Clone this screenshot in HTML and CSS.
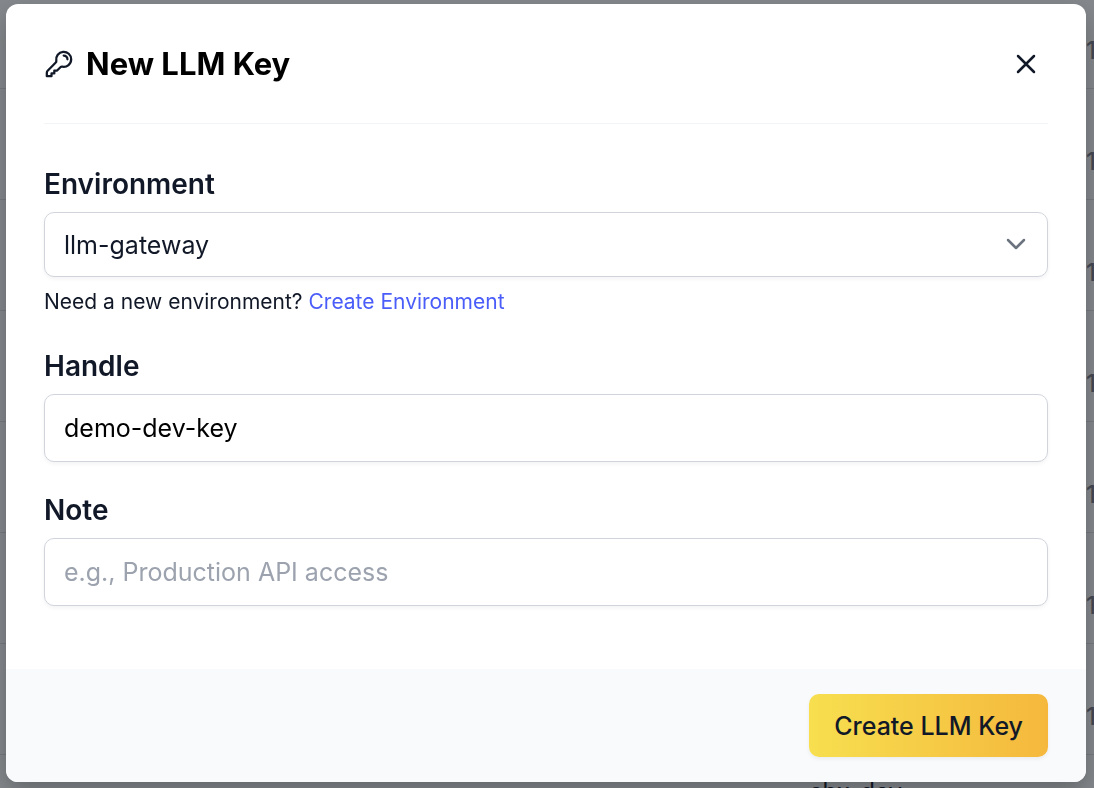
FILE: index.html
```html
<!DOCTYPE html>
<html lang="en">
<head>
    <meta charset="UTF-8">
    <meta name="viewport" content="width=device-width, initial-scale=1.0">
    <title>New LLM Key</title>
    <link rel="stylesheet" href="styles.css">
</head>
<body>
<!-- Key list behind the dialog -->
<div class="key-list">
    <div class="key-row"><span></span><span class="key-count">1</span></div>
    <div class="key-row"><span></span><span class="key-count">1</span></div>
    <div class="key-row"><span></span><span class="key-count">1</span></div>
    <div class="key-row"><span></span><span class="key-count">1</span></div>
    <div class="key-row"><span></span><span class="key-count">1</span></div>
    <div class="key-row"><span></span><span class="key-count">1</span></div>
    <div class="key-row"><span></span><span class="key-count">1</span></div>
    <div class="key-row"><span class="key-name">sbx-dev</span><span></span></div>
</div>

<div class="overlay">
    <form class="modal" role="dialog" aria-labelledby="modalTitle">
        <div class="modal-body">
            <div class="modal-header">
                <svg class="key-icon" viewBox="0 0 24 24" aria-hidden="true">
                    <path d="M15.75 5.25a3 3 0 0 1 3 3m3 0a6 6 0 0 1-7.029 5.912c-.563-.097-1.159.026-1.563.43L10.5 17.25H8.25v2.25H6v2.25H2.25v-2.818c0-.597.237-1.17.659-1.591l6.499-6.499c.404-.404.527-1 .43-1.563A6 6 0 1 1 21.75 8.25Z"/>
                </svg>
                <h2 class="modal-title" id="modalTitle">New LLM Key</h2>
                <button class="close-button" type="button" aria-label="Close">
                    <svg viewBox="0 0 24 24" aria-hidden="true"><path d="M4 4l16 16M20 4L4 20"/></svg>
                </button>
            </div>

            <div class="field">
                <label for="environment">Environment</label>
                <div class="select-wrap">
                    <select class="control select" id="environment">
                        <option>llm-gateway</option>
                    </select>
                    <svg class="chevron" viewBox="0 0 20 12" aria-hidden="true"><path d="M2 2l8 8 8-8"/></svg>
                </div>
                <p class="hint">Need a new environment? <a href="#">Create Environment</a></p>
            </div>

            <div class="field">
                <label for="handle">Handle</label>
                <input class="control" type="text" id="handle" value="demo-dev-key">
            </div>

            <div class="field">
                <label for="note">Note</label>
                <input class="control" type="text" id="note" placeholder="e.g., Production API access">
            </div>
        </div>

        <div class="modal-footer">
            <button class="create-button" type="submit">Create LLM Key</button>
        </div>
    </form>
</div>
</body>
</html>
```
FILE: styles.css
```css
* {
    box-sizing: border-box;
}

body {
    margin: 0;
    height: 100vh;
    overflow: hidden;
    font-family: Inter, "Liberation Sans", sans-serif;
    color: #111827;
    background-color: #85898d;
}

h2,
p {
    margin: 0;
}

/* Dimmed list */
.key-list {
    height: 100vh;
    overflow: hidden;
}

.key-row {
    display: grid;
    grid-template-columns: 1fr 8px;
    height: 111px;
    padding-top: 22px;
    font-size: 24px;
    line-height: 30px;
    border-bottom: 1px solid #777b80;
    white-space: nowrap;
}

.key-row:first-child {
    height: 89px;
    padding-top: 0;
}

.key-name {
    justify-self: end;
    margin-right: 184px;
}

.key-count {
    padding-top: 36px;
    font-weight: 500;
    color: #454954;
}

/* Dialog */
.overlay {
    position: fixed;
    inset: 0;
    display: flex;
    padding: 4px 8px 6px 6px;
}

.modal {
    flex: 1;
    display: flex;
    flex-direction: column;
    overflow: hidden;
    background-color: #fff;
    border-radius: 12px;
    box-shadow: 0 10px 24px rgba(0, 0, 0, 0.25);
}

.modal-body {
    flex: 1;
    display: flex;
    flex-direction: column;
    gap: 28px;
    padding: 0 38px;
}

.modal-header {
    display: flex;
    align-items: center;
    gap: 12px;
    height: 120px;
    margin-bottom: 12px;
    border-bottom: 1px solid #f3f4f6;
}

.key-icon {
    width: 30px;
    height: 30px;
    fill: none;
    stroke: currentColor;
    stroke-width: 1.8;
    stroke-linecap: round;
    stroke-linejoin: round;
}

.modal-title {
    flex: 1;
    font-size: 31px;
    line-height: 40px;
    font-weight: 700;
    color: #000;
}

.close-button {
    display: flex;
    padding: 10px;
    color: #111827;
    background: none;
    border: none;
    cursor: pointer;
}

.close-button svg {
    width: 24px;
    height: 24px;
}

.close-button path,
.chevron path {
    fill: none;
    stroke: currentColor;
    stroke-width: 2.5;
    stroke-linecap: round;
    stroke-linejoin: round;
}

.field {
    display: flex;
    flex-direction: column;
}

.field label {
    margin-bottom: 8px;
    font-size: 28px;
    line-height: 40px;
    font-weight: 600;
}

.control {
    width: 100%;
    height: 68px;
    padding: 0 19px;
    font-family: inherit;
    font-size: 25px;
    color: #000;
    background-color: #fff;
    border: 1px solid #d1d5db;
    border-radius: 10px;
    box-shadow: 0 2px 4px rgba(0, 0, 0, 0.05);
}

.control::placeholder {
    color: #9ca3af;
}

.select-wrap {
    position: relative;
}

.select {
    display: block;
    height: 65px;
    color: #111827;
    appearance: none;
}

.chevron {
    position: absolute;
    top: 26px;
    right: 22px;
    width: 20px;
    height: 12px;
    color: #6b7280;
    pointer-events: none;
}

.hint {
    margin-top: 8px;
    font-size: 21px;
    line-height: 33px;
}

.hint a {
    color: #4a5df9;
    text-decoration: none;
}

.modal-footer {
    display: flex;
    justify-content: flex-end;
    padding: 25px 38px;
    background-color: #f9fafb;
}

.create-button {
    height: 63px;
    padding: 0 25px;
    font-family: inherit;
    font-size: 25px;
    font-weight: 500;
    color: #111827;
    background: linear-gradient(to right, #f7df4f, #f5b83d);
    border: none;
    border-radius: 10px;
    box-shadow: 0 2px 4px rgba(0, 0, 0, 0.06);
    cursor: pointer;
}
```
